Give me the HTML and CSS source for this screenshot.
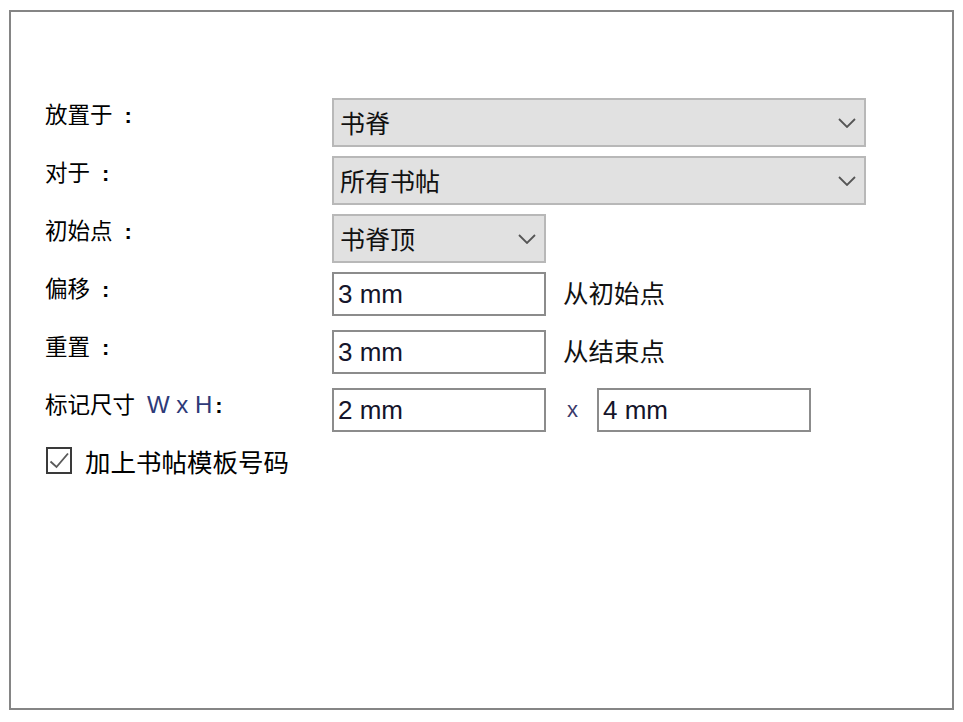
FILE: index.html
```html
<!DOCTYPE html>
<html lang="zh-CN">
<head>
<meta charset="utf-8">
<title>书帖标记</title>
<link rel="stylesheet" href="styles.css">
</head>
<body>
<div class="frame">
  <div class="form">
    <div class="row">
      <div class="label">放置于<span class="colon">:</span></div>
      <div class="combo wide"><span class="val">书脊</span>
        <svg class="chev" viewBox="0 0 18 10" width="18" height="10"><path d="M1 1 L9 9 L17 1" fill="none" stroke="#555" stroke-width="1.8"/></svg>
      </div>
    </div>
    <div class="row">
      <div class="label">对于<span class="colon">:</span></div>
      <div class="combo wide"><span class="val">所有书帖</span>
        <svg class="chev" viewBox="0 0 18 10" width="18" height="10"><path d="M1 1 L9 9 L17 1" fill="none" stroke="#555" stroke-width="1.8"/></svg>
      </div>
    </div>
    <div class="row">
      <div class="label">初始点<span class="colon">:</span></div>
      <div class="combo narrow"><span class="val">书脊顶</span>
        <svg class="chev" viewBox="0 0 18 10" width="18" height="10"><path d="M1 1 L9 9 L17 1" fill="none" stroke="#555" stroke-width="1.8"/></svg>
      </div>
    </div>
    <div class="row">
      <div class="label">偏移<span class="colon">:</span></div>
      <div class="input">3 mm</div>
      <div class="after">从初始点</div>
    </div>
    <div class="row">
      <div class="label">重置<span class="colon">:</span></div>
      <div class="input">3 mm</div>
      <div class="after">从结束点</div>
    </div>
    <div class="row">
      <div class="label">标记尺寸<span class="latin">W x H</span><span class="colon tight">:</span></div>
      <div class="input">2 mm</div>
      <div class="times">x</div>
      <div class="input">4 mm</div>
    </div>
    <div class="check-row">
      <span class="box"><svg viewBox="0 0 22 22" width="22" height="22"><path d="M2.5 12.5 L8.5 18 L20 4.5" fill="none" stroke="#5a5a5a" stroke-width="1.9"/></svg></span>
      <span class="check-label">加上书帖模板号码</span>
    </div>
  </div>
</div>
</body>
</html>
```
FILE: styles.css
```css
html, body {
  margin: 0;
  padding: 0;
  background: #ffffff;
}
body {
  font-family: "Noto Sans CJK SC", "Liberation Sans", sans-serif;
  color: #111111;
}
.frame {
  margin: 10px 0 0 9px;
  width: 941px;
  height: 696px;
  border: 2px solid #858585;
  box-sizing: content-box;
}
.form {
  padding: 86px 0 0 34px;
  display: flex;
  flex-direction: column;
  gap: 9px;
}
.row {
  display: flex;
  align-items: flex-start;
  height: 49px;
}
.label {
  width: 287px;
  font-size: 22.5px;
  line-height: 30px;
  white-space: nowrap;
  color: #000;
}
.colon {
  font-family: "Liberation Sans", sans-serif;
  font-weight: 700;
  font-size: 22px;
  margin-left: 12px;
}
.colon.tight {
  margin-left: 3px;
}
.latin {
  font-family: "Liberation Sans", sans-serif;
  color: #2e3a78;
  font-size: 24px;
  margin-left: 12px;
}
.combo {
  height: 49px;
  box-sizing: border-box;
  background: #e1e1e1;
  border: 2px solid #b8b8b8;
  display: flex;
  align-items: center;
  justify-content: space-between;
  padding: 0 8px 0 6px;
  font-size: 25px;
}
.combo.wide { width: 534px; }
.combo.narrow { width: 214px; }
.val { line-height: 1; }
.chev { flex: none; }
.input {
  width: 214px;
  height: 44px;
  box-sizing: border-box;
  border: 2px solid #8c8c8c;
  background: #fff;
  font-family: "Liberation Sans", sans-serif;
  font-size: 26px;
  line-height: 40px;
  padding-left: 4px;
  color: #15152a;
}
.after {
  margin-left: 17px;
  font-size: 25.5px;
  line-height: 40px;
}
.times {
  width: 51px;
  box-sizing: border-box;
  padding-left: 21px;
  font-family: "Liberation Sans", sans-serif;
  font-size: 22px;
  line-height: 44px;
  color: #3a3a6a;
}
.check-row {
  display: flex;
  align-items: center;
  gap: 13px;
  margin-top: -4px;
  height: 36px;
}
.box {
  width: 26px;
  height: 27px;
  margin-left: 1px;
  box-sizing: border-box;
  border: 2px solid #3a3a3a;
  display: flex;
  align-items: center;
  justify-content: center;
}
.box svg { display: block; }
.check-label {
  font-size: 25.5px;
  color: #000;
}
```
